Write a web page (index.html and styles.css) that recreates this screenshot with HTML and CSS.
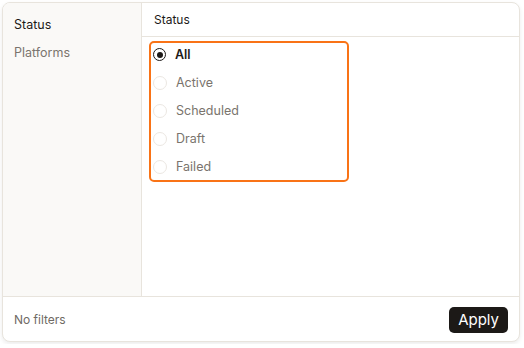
FILE: index.html
```html
<!DOCTYPE html>
<html lang="en">
<head>
  <meta charset="UTF-8">
  <meta name="viewport" content="width=device-width, initial-scale=1.0">
  <link rel="stylesheet" href="styles.css">
  <title>Filters</title>
</head>
<body>
  <div class="filter-panel">
    <div class="panel-body">
      <div class="sidebar">
        <div class="side-item active">Status</div>
        <div class="side-item">Platforms</div>
      </div>
      <div class="main">
        <div class="main-header">Status</div>
        <div class="options">
          <label class="option selected"><span class="radio"></span>All</label>
          <label class="option"><span class="radio"></span>Active</label>
          <label class="option"><span class="radio"></span>Scheduled</label>
          <label class="option"><span class="radio"></span>Draft</label>
          <label class="option"><span class="radio"></span>Failed</label>
        </div>
      </div>
    </div>
    <div class="panel-footer">
      <span class="summary">No filters</span>
      <button class="apply-button">Apply</button>
    </div>
  </div>
</body>
</html>
```

FILE: styles.css
```css
body {
  font-family: 'Inter', 'Noto Sans', sans-serif;
  background: #ffffff;
  margin: 0;
  padding: 2px;
}

.filter-panel {
  width: 516px;
  height: 338px;
  border: 1px solid #e8e4dd;
  border-radius: 8px;
  background: #fff;
  box-shadow: 0 2px 4px rgba(0, 0, 0, 0.08);
  display: flex;
  flex-direction: column;
  overflow: hidden;
}

.panel-body {
  flex: 1;
  display: flex;
  border-bottom: 1px solid #e8e4dd;
}

.sidebar {
  width: 138px;
  background: #faf9f7;
  border-right: 1px solid #e8e4dd;
  padding-top: 12px;
}

.side-item {
  font-size: 12.5px;
  color: #7a746d;
  padding: 0 11px;
  height: 28px;
  line-height: 20px;
}

.side-item.active {
  color: #1c1917;
}

.main {
  flex: 1;
}

.main-header {
  height: 33px;
  line-height: 33px;
  border-bottom: 1px solid #e8e4dd;
  padding-left: 12px;
  font-size: 12px;
  color: #1c1917;
}

.options {
  margin: 4px 0 0 7px;
  padding-bottom: 1px;
  width: 200px;
  outline: 2px solid #f97316;
  outline-offset: -2px;
  border-radius: 5px;
}

.option {
  display: flex;
  align-items: center;
  gap: 9px;
  height: 28px;
  padding-left: 4px;
  padding-bottom: 1px;
  box-sizing: border-box;
  font-size: 12.5px;
  color: #7a746d;
}

.option.selected {
  color: #1c1917;
  font-weight: 600;
}

.radio {
  width: 12px;
  height: 12px;
  border: 1px solid #ebe7e2;
  border-radius: 50%;
  display: flex;
  align-items: center;
  justify-content: center;
}

.option.selected .radio {
  border: 1.5px solid #1c1917;
  width: 11px;
  height: 11px;
}

.option.selected .radio::after {
  content: "";
  width: 6px;
  height: 6px;
  border-radius: 50%;
  background: #1c1917;
}

.panel-footer {
  height: 44px;
  display: flex;
  align-items: center;
  justify-content: space-between;
  padding: 0 11px;
}

.summary {
  font-size: 12px;
  color: #6f6a64;
}

.apply-button {
  background: #1c1917;
  color: #fff;
  border: none;
  border-radius: 5px;
  font-family: inherit;
  font-size: 15px;
  padding: 0 9px;
  height: 26px;
  margin-top: 1px;
}
```
